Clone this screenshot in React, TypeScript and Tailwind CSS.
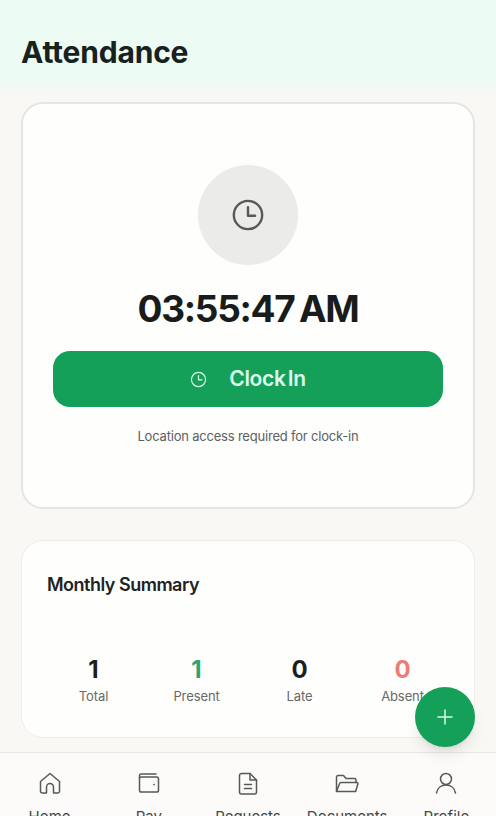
import React from 'react';
import { Plus } from 'lucide-react';

const stats = [
  { value: '1', label: 'Total', color: 'text-[#1b1f1e]' },
  { value: '1', label: 'Present', color: 'text-[#2aa578]' },
  { value: '0', label: 'Late', color: 'text-[#1b1f1e]' },
  { value: '0', label: 'Absent', color: 'text-[#ee7b76]' },
];

const ClockIcon: React.FC<{ className?: string }> = ({ className = '' }) => (
  <svg className={className} viewBox="0 0 24 24" fill="none" stroke="currentColor" strokeWidth={1.7} strokeLinecap="round" strokeLinejoin="round">
    <circle cx="12" cy="12" r="10" />
    <path d="M12 6.5V12.5H17" />
  </svg>
);

const navItems = [
  {
    label: 'Home',
    icon: <path d="M2.5 10.5 12 2.500l9.500 8v9.700a1.800 1.800 0 0 1-1.800 1.800H15.500v-6a3.500 3.500 0 0 0-7 0v6H4.300a1.800 1.800 0 0 1-1.800-1.800z" />,
  },
  {
    label: 'Pay',
    icon: (
      <>
        <rect x="2.500" y="6" width="19" height="15" rx="1.800" />
        <path d="M2.500 7V4.800A1.800 1.800 0 0 1 4.300 3H19" />
        <path d="M16.800 13.500h.4" />
      </>
    ),
  },
  {
    label: 'Requests',
    icon: (
      <>
        <path d="M3.500 4.500a2 2 0 0 1 2-2h8.500l6.500 6.500V21a2 2 0 0 1-2 2h-13a2 2 0 0 1-2-2z" />
        <path d="M14 2.500V9H20.500" />
        <path d="M8.500 13.500h7M8.500 17.500h7" />
      </>
    ),
  },
  {
    label: 'Documents',
    icon: (
      <>
        <path d="M1.500 20.500V6A1.500 1.500 0 0 1 3 4.500h5.500L11 7.500h8.500A1.500 1.500 0 0 1 21 9v2.500" />
        <path d="M1.500 20.500 4.600 12.600a1.600 1.600 0 0 1 1.500-1.100h15.800a1 1 0 0 1 1 1.300l-2.200 7.700z" />
      </>
    ),
  },
  {
    label: 'Profile',
    icon: (
      <>
        <circle cx="12" cy="8" r="5.500" />
        <path d="M2.500 22c.8-4.600 4.400-8 9.500-8s8.700 3.400 9.500 8" />
      </>
    ),
  },
];

const App: React.FC = () => {
  return (
    <div className="relative flex h-[816px] w-[496px] flex-col overflow-hidden bg-[#f9f8f5] font-['Inter',sans-serif]">
      {/* Header */}
      <div className="h-[94px] shrink-0 bg-linear-to-b from-[#ecfbf4] from-85% to-[#f9f8f5] px-[21px] pt-[33px]">
        <h1 className="text-[30px] leading-[38px] font-bold tracking-[-0.2px] text-[#17211d]">Attendance</h1>
      </div>

      <div className="flex flex-1 flex-col px-[21px] pt-2">
        {/* Clock card */}
        <div className="flex h-[407px] shrink-0 flex-col items-center rounded-[22px] border-2 border-[#e6e5e2] bg-[#fefefd] px-[30px] pt-[61px]">
          <div className="flex h-[100px] w-[100px] items-center justify-center rounded-full bg-[#ebebe9]">
            <ClockIcon className="h-[34px] w-[34px] text-[#555a58]" />
          </div>
          <div className="mt-[17px] text-[37px] leading-[54px] font-bold tracking-[-1.3px] whitespace-nowrap text-[#181c1b] [word-spacing:-3px]">03:55:47 AM</div>
          <button className="mt-[15px] flex h-[56px] w-full items-center justify-center gap-[22px] rounded-[17px] bg-[#15a05a] text-[21px] font-semibold tracking-[-0.3px] text-[#dcfbe9] [word-spacing:-3px]">
            <ClockIcon className="h-[17px] w-[17px]" />
            <span>Clock In</span>
          </button>
          <p className="mt-[21px] text-[13px] leading-4 tracking-[-0.2px] whitespace-nowrap text-[#5c605f]">Location access required for clock-in</p>
        </div>

        {/* Monthly summary */}
        <div className="mt-[31px] h-[198px] shrink-0 rounded-[22px] border border-[#eeedea] bg-[#fefefd] px-5 pt-[32px]">
          <h2 className="pl-[5px] text-[18px] leading-6 font-semibold tracking-[-0.5px] text-[#1f2322]">Monthly Summary</h2>
          <div className="mt-[57px] grid grid-cols-4">
            {stats.map((stat) => (
              <div key={stat.label} className="flex flex-col items-center">
                <span className={`text-[24px] leading-8 font-bold ${stat.color}`}>{stat.value}</span>
                <span className="mt-[2px] text-[13px] leading-4 tracking-[-0.1px] text-[#666a69]">{stat.label}</span>
              </div>
            ))}
          </div>
        </div>
      </div>

      {/* Bottom nav */}
      <nav className="grid h-[64px] shrink-0 grid-cols-5 border-t border-[#e8e7e4] bg-[#fcfbf9] pt-[18px]">
        {navItems.map(({ label, icon }) => (
          <div key={label} className="flex flex-col items-center">
            <svg className="h-[24px] w-[24px] text-[#555a58]" viewBox="0 0 24 24" fill="none" stroke="currentColor" strokeWidth={1.5} strokeLinecap="round" strokeLinejoin="round">
              {icon}
            </svg>
            <span className="mt-[12px] text-[15px] leading-5 whitespace-nowrap text-[#444847]">{label}</span>
          </div>
        ))}
      </nav>

      {/* Floating action button */}
      <button className="absolute top-[687px] left-[415px] flex h-[60px] w-[60px] items-center justify-center rounded-full bg-[#15a05a] shadow-lg">
        <Plus className="h-[24px] w-[24px] text-[#d8f8e6]" strokeWidth={1.5} />
      </button>
    </div>
  );
};

export default App;
